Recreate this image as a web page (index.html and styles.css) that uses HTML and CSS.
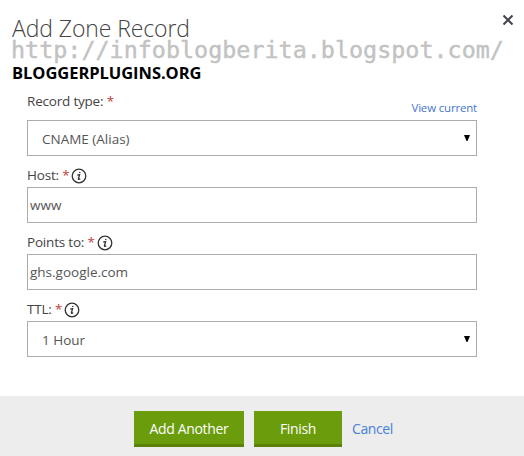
FILE: index.html
```html
<!DOCTYPE html>
<html lang="en">

<head>
    <meta charset="UTF-8">
    <meta name="viewport" content="width=device-width, initial-scale=1.0">
    <title>Add Zone Record</title>
    <link rel="stylesheet" href="styles.css">
</head>

<body>
    <div class="dialog">
        <div class="header">
            <h2>Add Zone Record</h2>
            <button class="close" aria-label="Close">
                <svg width="12" height="12" viewBox="0 0 12 12"><path d="M1.5 1.5L10.5 10.5M10.5 1.5L1.5 10.5" /></svg>
            </button>
        </div>
        <div class="site-url">http://infoblogberita.blogspot.com/</div>
        <div class="site-name">BLOGGERPLUGINS.ORG</div>

        <div class="form">
            <div class="label-row first">
                <label>Record type: <span class="required">*</span></label>
                <a href="#" class="view-current">View current</a>
            </div>
            <div class="field select">
                <span>CNAME (Alias)</span>
                <svg class="arrow" width="6" height="6" viewBox="0 0 6 6"><path d="M0 0H6L3.5 6H2.5Z" /></svg>
            </div>

            <div class="label-row">
                <label>Host: <span class="required">*</span></label>
                <svg class="info" width="16" height="16" viewBox="0 0 16 16"><circle cx="8" cy="8" r="6.8" /><path d="M6.2 7.1L8.6 6.6L7.4 10.8Q7.4 11.8 9.3 10.7M8.9 3.8L8.7 5" /></svg>
            </div>
            <div class="field"><span>www</span></div>

            <div class="label-row">
                <label>Points to: <span class="required">*</span></label>
                <svg class="info" width="16" height="16" viewBox="0 0 16 16"><circle cx="8" cy="8" r="6.8" /><path d="M6.2 7.1L8.6 6.6L7.4 10.8Q7.4 11.8 9.3 10.7M8.9 3.8L8.7 5" /></svg>
            </div>
            <div class="field"><span>ghs.google.com</span></div>

            <div class="label-row">
                <label>TTL: <span class="required">*</span></label>
                <svg class="info" width="16" height="16" viewBox="0 0 16 16"><circle cx="8" cy="8" r="6.8" /><path d="M6.2 7.1L8.6 6.6L7.4 10.8Q7.4 11.8 9.3 10.7M8.9 3.8L8.7 5" /></svg>
            </div>
            <div class="field select">
                <span class="ttl-value">1 Hour</span>
                <svg class="arrow" width="6" height="6" viewBox="0 0 6 6"><path d="M0 0H6L3.5 6H2.5Z" /></svg>
            </div>
        </div>

        <div class="footer">
            <button class="btn btn-add">Add Another</button>
            <button class="btn btn-finish">Finish</button>
            <a href="#" class="cancel">Cancel</a>
        </div>
    </div>
</body>

</html>
```
FILE: styles.css
```css
* {
    box-sizing: border-box;
}

body {
    margin: 0;
    font-family: "Open Sans", "Noto Sans", sans-serif;
    font-size: 13.5px;
    color: #444;
    background-color: white;
}

.dialog {
    display: flex;
    flex-direction: column;
    width: 524px;
    height: 456px;
    overflow: hidden;
}

.header {
    display: flex;
    justify-content: space-between;
    height: 40px;
    padding: 14px 10px 0 12px;
}

h2 {
    margin: 0;
    font-size: 23px;
    font-weight: 300;
    line-height: 28px;
    letter-spacing: -0.1px;
    color: #444;
}

.close {
    width: 12px;
    height: 12px;
    padding: 0;
    border: none;
    background: none;
    cursor: pointer;
}

.close svg {
    display: block;
    fill: none;
    stroke: #47434d;
    stroke-width: 2;
}

.site-url {
    height: 24px;
    padding-left: 11px;
    font-family: "DejaVu Sans Mono", monospace;
    font-size: 23.4px;
    line-height: 21px;
    white-space: nowrap;
    color: #c2c2c2;
    -webkit-text-stroke: 0.4px #c2c2c2;
}

.site-name {
    height: 20px;
    padding-left: 12px;
    font-size: 16.5px;
    font-weight: bold;
    line-height: 18px;
    letter-spacing: -0.05px;
    color: #000;
}

.form {
    width: 450px;
    margin-left: 27px;
}

.label-row {
    display: flex;
    align-items: center;
    height: 31px;
    padding-top: 7px;
    line-height: 18px;
    letter-spacing: -0.2px;
}

.label-row.first {
    justify-content: space-between;
    align-items: flex-start;
    height: 36px;
    padding-top: 8px;
}

.required {
    color: #c33c37;
}

.view-current {
    padding-top: 7px;
    font-size: 11.5px;
    letter-spacing: -0.18px;
    text-decoration: none;
    color: #4577cf;
}

.info {
    margin: 1px 0 0 2px;
    fill: none;
    stroke: #333;
    stroke-width: 1.3;
}

.field {
    display: flex;
    align-items: center;
    height: 36px;
    padding-left: 2px;
    border: 1px solid #acacac;
    color: #555;
}

.select {
    justify-content: space-between;
    padding: 0 6px 0 14px;
}

.select span {
    padding-top: 1px;
}

.select .ttl-value {
    padding-top: 2px;
}

.arrow {
    margin-bottom: 1px;
    fill: #000;
}

.footer {
    display: flex;
    align-items: flex-start;
    height: 60px;
    margin-top: auto;
    padding: 15px 0 0 134px;
    background-color: #ededed;
}

.btn {
    height: 36px;
    margin-right: 10px;
    padding: 2px 0 0;
    border: none;
    border-bottom: 3px solid #588208;
    background-color: #6a9c0b;
    color: white;
    font-family: inherit;
    font-size: 14px;
    letter-spacing: -0.35px;
    cursor: pointer;
}

.btn-add {
    width: 110px;
}

.btn-finish {
    width: 88px;
}

.cancel {
    font-size: 14px;
    line-height: 36px;
    letter-spacing: -0.4px;
    text-decoration: none;
    color: #4a7fda;
}
```
